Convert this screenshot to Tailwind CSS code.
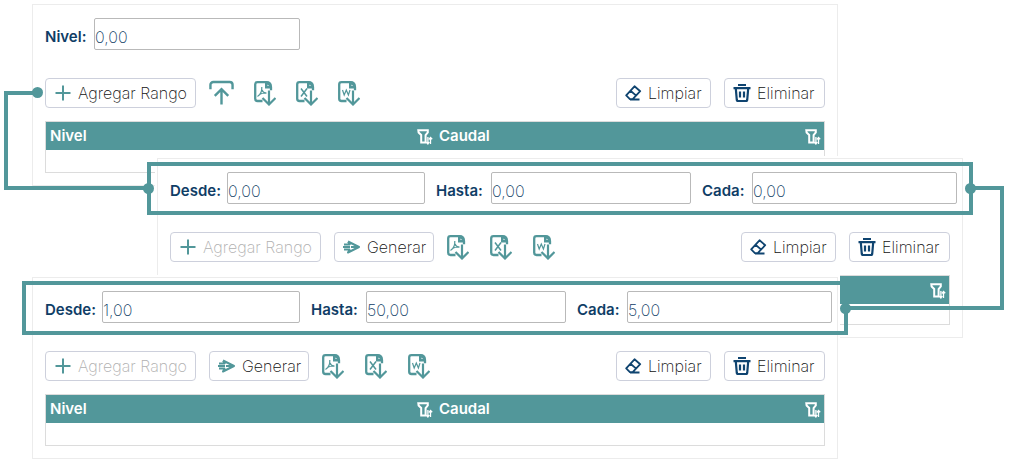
<!DOCTYPE html>
<html lang="es">
<head>
<meta charset="utf-8">
<meta name="viewport" content="width=device-width, initial-scale=1">
<title>Agregar Rango</title>
<script src="https://cdn.jsdelivr.net/npm/@tailwindcss/browser@4"></script>
</head>
<body class="bg-white font-['Inter',sans-serif] text-base font-extralight text-[#111111]">

<!-- Icon definitions -->
<svg class="hidden" aria-hidden="true">
  <symbol id="plus" viewBox="0 0 16 16"><path d="M8 .5v15M.5 8h15" fill="none" stroke="currentColor" stroke-width="2"/></symbol>
  <symbol id="upload" viewBox="0 0 26 26"><path d="M1.500 9V4.500a3 3 0 0 1 3-3h17a3 3 0 0 1 3 3V9M13 25V9.500M6 16l7-7 7 7" fill="none" stroke="currentColor" stroke-width="2.500"/></symbol>
  <symbol id="page" viewBox="0 0 22 25"><path d="M8.500 20H3.500a2.300 2.300 0 0 1-2.300-2.300V3.500A2.300 2.300 0 0 1 3.500 1.200H12l5 5v3" fill="none" stroke="currentColor" stroke-width="2.300"/><path d="M11 0h2a5 5 0 0 1 5 5v2.500h-7z" fill="currentColor"/><path d="M13.500 3.500v1.500h1.500z" fill="#fff"/><path d="M15 9.500v14M8.500 17l6.500 6.500 6.500-6.500" fill="none" stroke="currentColor" stroke-width="2.200"/></symbol>
  <symbol id="pdf" viewBox="0 0 22 25"><use href="#page"/><path d="M3.500 15.500c2.500-1.500 4.500-5.500 4.300-9.500M8 9c.7 2.200 2 3 4.500 3.200M5.500 13.500c2-1.200 4-1.600 6.500-1.500" fill="none" stroke="currentColor" stroke-width="1.200"/></symbol>
  <symbol id="xls" viewBox="0 0 22 25"><use href="#page"/><path d="M5 7.500l6 8M11 7.500l-6 8" fill="none" stroke="currentColor" stroke-width="1.500"/></symbol>
  <symbol id="doc" viewBox="0 0 22 25"><use href="#page"/><path d="M4.500 9l1.700 5L8.300 9l2.100 5L12 9" fill="none" stroke="currentColor" stroke-width="1.200"/></symbol>
  <symbol id="send" viewBox="0 0 18 14"><path d="M5 1.500L16 7 5 12.500 7 9M7 5L5 1.500M8 7h8M1 4.500h6M0 7h7M1 9.500h6" fill="none" stroke="currentColor" stroke-width="2" stroke-linejoin="round"/></symbol>
  <symbol id="eraser" viewBox="0 0 17 16"><path d="M9.500 1.300l5.700 4.900-7.500 7.900H4.900L1.200 10.400zM5.500 5.700l5.700 4.900M5 14.500h9.500" fill="none" stroke="currentColor" stroke-width="1.800" stroke-linejoin="round"/></symbol>
  <symbol id="trash" viewBox="0 0 18 18"><path d="M5 1h8M.5 4.200h17M2.800 4.500l1 11.500a1.200 1.200 0 0 0 1.200 1h8a1.200 1.200 0 0 0 1.200-1l1-11.500M7 7.500v6M11 7.500v6" fill="none" stroke="currentColor" stroke-width="2.200"/></symbol>
  <symbol id="filter" viewBox="0 0 16 16"><path d="M1.300 1.300h9.500v2L8.600 6v7.500H4.200V6L1.600 3.500z" fill="none" stroke="currentColor" stroke-width="2"/><path d="M10.900 15V8M9.300 13l1.600 2 1.400-2M13.500 15V8.500M12 10.300l1.500-1.800 1.700 1.800" fill="none" stroke="currentColor" stroke-width="1.300"/></symbol>
</svg>

<main class="relative h-screen min-h-[460px] overflow-hidden">

  <!-- Panel: single level -->
  <section class="absolute top-1 left-8 right-[172px] border border-[#ececec] bg-white px-3 pt-[13px] pb-3">
    <div class="-mr-[7px] grid grid-cols-3 gap-[11px]">
      <div class="flex items-center gap-2">
        <label for="nivel" class="w-[41px] shrink-0 pt-1.5 text-[15px] font-semibold text-[#0f3d66]">Nivel:</label>
        <input id="nivel" value="0,00" class="h-8 w-full min-w-0 rounded-xs border border-[#b9b9b9] pt-1.5 text-[#0f3d66]">
      </div>
    </div>
    <div class="mt-7 flex items-center justify-between">
      <div class="flex items-center gap-[13px]">
        <button class="flex h-[30px] w-[151px] items-center gap-[7px] rounded border border-[#cdd0dc] pl-[9px] whitespace-nowrap"><svg class="size-4 shrink-0 text-[#52979a]"><use href="#plus"/></svg>Agregar Rango</button>
        <div class="flex items-center gap-5 text-[#52979a]">
          <button aria-label="Subir"><svg class="h-[26px] w-[25px]"><use href="#upload"/></svg></button>
          <button aria-label="PDF"><svg class="h-[25px] w-[22px]"><use href="#pdf"/></svg></button>
          <button aria-label="Excel"><svg class="h-[25px] w-[22px]"><use href="#xls"/></svg></button>
          <button aria-label="Word"><svg class="h-[25px] w-[22px]"><use href="#doc"/></svg></button>
        </div>
      </div>
      <div class="flex gap-[13px]">
        <button class="flex h-[30px] w-[95px] items-center gap-1.5 rounded border border-[#cdd0dc] pl-2"><svg class="h-4 w-[17px] shrink-0 text-[#0f4470]"><use href="#eraser"/></svg>Limpiar</button>
        <button class="flex h-[30px] w-[101px] items-center gap-1.5 rounded border border-[#cdd0dc] pl-2"><svg class="size-[18px] shrink-0 text-[#0f4470]"><use href="#trash"/></svg>Eliminar</button>
      </div>
    </div>
    <table class="mt-[13px] w-full table-fixed border-collapse border border-[#dcdcdc]">
      <thead><tr class="h-7 bg-[#52979a] text-left text-[15px] leading-5 text-white">
        <th class="p-0 pr-0.5 pl-1 font-semibold"><div class="flex items-center justify-between">Nivel<svg class="mt-0.5 size-4"><use href="#filter"/></svg></div></th>
        <th class="p-0 pr-[3px] pl-1 font-semibold"><div class="flex items-center justify-between">Caudal<svg class="mt-0.5 size-4"><use href="#filter"/></svg></div></th>
      </tr></thead>
      <tbody><tr class="h-[23px]"><td colspan="2" class="p-0"></td></tr></tbody>
    </table>
  </section>

  <!-- Panel: empty range -->
  <section class="absolute top-[158px] left-[157px] right-[47px] border border-[#ececec] bg-white px-3 pt-[13px] pb-3 ring-2 ring-white">
    <div class="-mr-[7px] grid grid-cols-3 gap-[11px]">
      <div class="flex items-center gap-2">
        <label for="desde1" class="w-[49px] shrink-0 pt-1.5 text-[15px] font-semibold text-[#0f3d66]">Desde:</label>
        <input id="desde1" value="0,00" class="h-8 w-full min-w-0 rounded-xs border border-[#b9b9b9] pt-1.5 text-[#0f3d66]">
      </div>
      <div class="flex items-center gap-2">
        <label for="hasta1" class="w-[47px] shrink-0 pt-1.5 text-[15px] font-semibold text-[#0f3d66]">Hasta:</label>
        <input id="hasta1" value="0,00" class="h-8 w-full min-w-0 rounded-xs border border-[#b9b9b9] pt-1.5 text-[#0f3d66]">
      </div>
      <div class="flex items-center gap-2">
        <label for="cada1" class="w-[42px] shrink-0 pt-1.5 text-[15px] font-semibold text-[#0f3d66]">Cada:</label>
        <input id="cada1" value="0,00" class="h-8 w-full min-w-0 rounded-xs border border-[#b9b9b9] pt-1.5 text-[#0f3d66]">
      </div>
    </div>
    <div class="mt-7 flex items-center justify-between">
      <div class="flex items-center gap-[13px]">
        <button disabled class="flex h-[30px] w-[151px] items-center gap-[7px] rounded border border-[#cdd0dc] pl-[9px] whitespace-nowrap text-[#b0b0b0]"><svg class="size-4 shrink-0 text-[#52979a]"><use href="#plus"/></svg>Agregar Rango</button>
        <button class="flex h-[30px] w-[100px] items-center gap-1.5 rounded border border-[#cdd0dc] pl-2"><svg class="h-3.5 w-[18px] shrink-0 text-[#52979a]"><use href="#send"/></svg>Generar</button>
        <div class="flex items-center gap-[21px] text-[#52979a]">
          <button aria-label="PDF"><svg class="h-[25px] w-[22px]"><use href="#pdf"/></svg></button>
          <button aria-label="Excel"><svg class="h-[25px] w-[22px]"><use href="#xls"/></svg></button>
          <button aria-label="Word"><svg class="h-[25px] w-[22px]"><use href="#doc"/></svg></button>
        </div>
      </div>
      <div class="flex gap-[13px]">
        <button class="flex h-[30px] w-[95px] items-center gap-1.5 rounded border border-[#cdd0dc] pl-2"><svg class="h-4 w-[17px] shrink-0 text-[#0f4470]"><use href="#eraser"/></svg>Limpiar</button>
        <button class="flex h-[30px] w-[101px] items-center gap-1.5 rounded border border-[#cdd0dc] pl-2"><svg class="size-[18px] shrink-0 text-[#0f4470]"><use href="#trash"/></svg>Eliminar</button>
      </div>
    </div>
    <table class="mt-[13px] w-full table-fixed border-collapse border border-[#dcdcdc]">
      <thead><tr class="h-7 bg-[#52979a] text-left text-[15px] leading-5 text-white">
        <th class="p-0"></th>
        <th class="p-0 pr-[3px]"><div class="flex justify-end"><svg class="mt-0.5 size-4"><use href="#filter"/></svg></div></th>
      </tr></thead>
      <tbody><tr class="h-[21px]"><td colspan="2" class="p-0"></td></tr></tbody>
    </table>
  </section>

  <!-- Panel: filled range -->
  <section class="absolute top-[277px] left-8 right-[172px] border border-[#ececec] bg-white px-3 pt-[13px] pb-3 ring-2 ring-white">
    <div class="-mr-[7px] grid grid-cols-3 gap-[11px]">
      <div class="flex items-center gap-2">
        <label for="desde2" class="w-[49px] shrink-0 pt-1.5 text-[15px] font-semibold text-[#0f3d66]">Desde:</label>
        <input id="desde2" value="1,00" class="h-8 w-full min-w-0 rounded-xs border border-[#b9b9b9] pt-1.5 text-[#0f3d66]">
      </div>
      <div class="flex items-center gap-2">
        <label for="hasta2" class="w-[47px] shrink-0 pt-1.5 text-[15px] font-semibold text-[#0f3d66]">Hasta:</label>
        <input id="hasta2" value="50,00" class="h-8 w-full min-w-0 rounded-xs border border-[#b9b9b9] pt-1.5 text-[#0f3d66]">
      </div>
      <div class="flex items-center gap-2">
        <label for="cada2" class="w-[42px] shrink-0 pt-1.5 text-[15px] font-semibold text-[#0f3d66]">Cada:</label>
        <input id="cada2" value="5,00" class="h-8 w-full min-w-0 rounded-xs border border-[#b9b9b9] pt-1.5 text-[#0f3d66]">
      </div>
    </div>
    <div class="mt-7 flex items-center justify-between">
      <div class="flex items-center gap-[13px]">
        <button disabled class="flex h-[30px] w-[151px] items-center gap-[7px] rounded border border-[#cdd0dc] pl-[9px] whitespace-nowrap text-[#b0b0b0]"><svg class="size-4 shrink-0 text-[#52979a]"><use href="#plus"/></svg>Agregar Rango</button>
        <button class="flex h-[30px] w-[100px] items-center gap-1.5 rounded border border-[#cdd0dc] pl-2"><svg class="h-3.5 w-[18px] shrink-0 text-[#52979a]"><use href="#send"/></svg>Generar</button>
        <div class="flex items-center gap-[21px] text-[#52979a]">
          <button aria-label="PDF"><svg class="h-[25px] w-[22px]"><use href="#pdf"/></svg></button>
          <button aria-label="Excel"><svg class="h-[25px] w-[22px]"><use href="#xls"/></svg></button>
          <button aria-label="Word"><svg class="h-[25px] w-[22px]"><use href="#doc"/></svg></button>
        </div>
      </div>
      <div class="flex gap-[13px]">
        <button class="flex h-[30px] w-[95px] items-center gap-1.5 rounded border border-[#cdd0dc] pl-2"><svg class="h-4 w-[17px] shrink-0 text-[#0f4470]"><use href="#eraser"/></svg>Limpiar</button>
        <button class="flex h-[30px] w-[101px] items-center gap-1.5 rounded border border-[#cdd0dc] pl-2"><svg class="size-[18px] shrink-0 text-[#0f4470]"><use href="#trash"/></svg>Eliminar</button>
      </div>
    </div>
    <table class="mt-[13px] w-full table-fixed border-collapse border border-[#dcdcdc]">
      <thead><tr class="h-7 bg-[#52979a] text-left text-[15px] leading-5 text-white">
        <th class="p-0 pr-0.5 pl-1 font-semibold"><div class="flex items-center justify-between">Nivel<svg class="mt-0.5 size-4"><use href="#filter"/></svg></div></th>
        <th class="p-0 pr-[3px] pl-1 font-semibold"><div class="flex items-center justify-between">Caudal<svg class="mt-0.5 size-4"><use href="#filter"/></svg></div></th>
      </tr></thead>
      <tbody><tr class="h-[23px]"><td colspan="2" class="p-0"></td></tr></tbody>
    </table>
  </section>

  <!-- Callout frames and connectors -->
  <div class="pointer-events-none absolute inset-0">
    <div class="absolute top-[162px] right-[37px] left-[147px] h-[53px] border-4 border-[#52979a]"></div>
    <div class="absolute top-[281px] right-[162px] left-[22px] h-[54px] border-4 border-[#52979a]"></div>
    <div class="absolute top-[91px] left-1 h-[99px] w-[33px] border-t-4 border-l-4 border-[#52979a]"></div>
    <div class="absolute top-[186px] left-1 h-1 w-[145px] bg-[#52979a]"></div>
    <div class="absolute top-[186px] right-[6px] h-[120px] w-[34px] border-t-4 border-r-4 border-[#52979a]"></div>
    <div class="absolute top-[306px] right-[6px] h-1 w-[159px] bg-[#52979a]"></div>
    <div class="absolute top-[87px] left-8 size-[11px] rounded-full bg-[#52979a]"></div>
    <div class="absolute top-[183px] left-[143px] size-[11px] rounded-full bg-[#52979a]"></div>
    <div class="absolute top-[183px] right-[34px] size-[11px] rounded-full bg-[#52979a]"></div>
    <div class="absolute top-[303px] right-[159px] size-[11px] rounded-full bg-[#52979a]"></div>
  </div>
</main>
</body>
</html>
